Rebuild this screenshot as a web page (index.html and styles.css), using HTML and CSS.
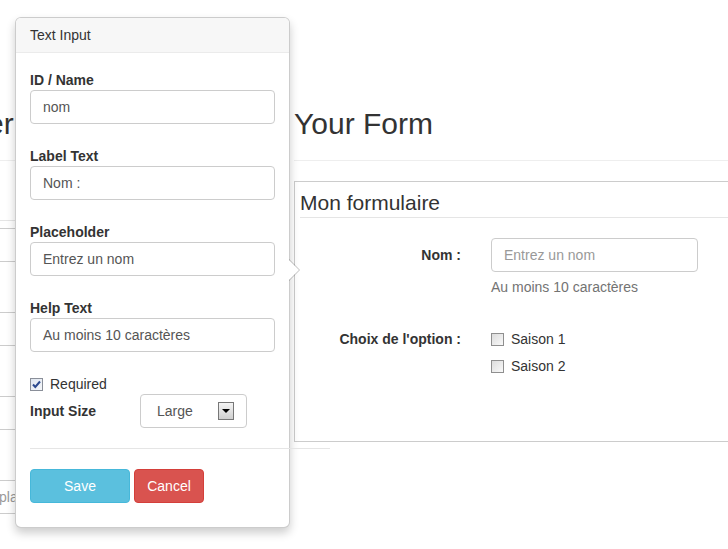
FILE: index.html
```html
<!DOCTYPE html>
<html>
<head>
<meta charset="utf-8">
<link rel="stylesheet" href="styles.css">
</head>
<body>
<div class="page">
  <div class="col-left">
    <div class="page-header"><h2>Form Builder</h2></div>
    <div class="l-legend"></div>
    <div class="l-input first"></div>
    <div class="l-input"></div>
    <div class="l-input"></div>
    <div class="l-input ph">placeholder</div>
  </div>
  <div class="col-right">
    <div class="page-header"><h2>Your Form</h2></div>
    <div class="form-box">
      <div class="legend">Mon formulaire</div>
      <div class="form-group">
        <div class="control-label">Nom :</div>
        <div class="controls">
          <div class="input placeholder">Entrez un nom</div>
          <p class="help">Au moins 10 caractères</p>
        </div>
      </div>
      <div class="form-group">
        <div class="control-label">Choix de l'option :</div>
        <div class="controls">
          <div class="checkbox"><span class="cb"></span>Saison 1</div>
          <div class="checkbox"><span class="cb"></span>Saison 2</div>
        </div>
      </div>
    </div>
  </div>
</div>

<div class="popover">
  <div class="arrow"></div>
  <h3 class="popover-title">Text Input</h3>
  <div class="popover-content">
    <div class="p-group">
      <div class="p-label">ID / Name</div>
      <div class="input">nom</div>
    </div>
    <div class="p-group">
      <div class="p-label">Label Text</div>
      <div class="input">Nom :</div>
    </div>
    <div class="p-group">
      <div class="p-label">Placeholder</div>
      <div class="input">Entrez un nom</div>
    </div>
    <div class="p-group">
      <div class="p-label">Help Text</div>
      <div class="input">Au moins 10 caractères</div>
    </div>
    <div class="req"><span class="cb checked"><svg width="11" height="11" viewBox="0 0 11 11"><path d="M2 5.5 L4.3 8 L9 2.5" fill="none" stroke="#2c4a8f" stroke-width="2"/></svg></span>Required</div>
    <div class="size-row">
      <div class="size-label">Input Size</div>
      <div class="select"><span>Large</span><span class="sel-arrow"></span></div>
    </div>
    <div class="sep"></div>
    <div class="buttons">
      <div class="btn btn-info">Save</div>
      <div class="btn btn-danger">Cancel</div>
    </div>
  </div>
</div>
</body>
</html>
```

FILE: styles.css
```css
* { box-sizing: border-box; }
html, body { margin: 0; height: 100%; }
body {
  font-family: "Liberation Sans", Arial, sans-serif;
  font-size: 14px;
  line-height: 20px;
  color: #333;
  background: #fff;
  overflow: hidden;
  position: relative;
}
.page { display: flex; margin-left: -158px; width: 1300px; }
.col-left { width: 438px; flex: none; }
.col-right { width: 800px; padding-left: 14px; flex: none; }
.page-header { padding-bottom: 20px; border-bottom: 1px solid #eee; }
.page-header h2 {
  margin: 107px 0 0;
  font-size: 30px;
  line-height: 33px;
  font-weight: normal;
  white-space: nowrap;
}
.l-legend { height: 60px; border-bottom: 1px solid #e5e5e5; }
.l-input {
  margin: 50px 0 0 146px;
  width: 280px;
  height: 34px;
  border: 1px solid #ccc;
  border-radius: 4px;
  padding: 6px 10px;
  color: #999;
}
.l-input.first { margin-top: 7px; }

.form-box {
  margin-top: 20px;
  border: 1px solid #ccc;
  padding: 6px 0 50px 5px;
  width: 700px;
}
.legend {
  font-size: 21px;
  line-height: 29px;
  border-bottom: 1px solid #e5e5e5;
  margin-bottom: 20px;
}
.form-group { display: flex; margin-bottom: 15px; }
.control-label {
  width: 176px;
  padding: 7px 15px 0 0;
  text-align: right;
  font-weight: bold;
}
.controls { padding-left: 15px; }
.input {
  height: 34px;
  border: 1px solid #ccc;
  border-radius: 4px;
  padding: 6px 12px;
  color: #555;
  background: #fff;
  white-space: nowrap;
}
.controls .input { width: 207px; }
.placeholder { color: #999 !important; }
.help { margin: 5px 0 10px; color: #737373; }
.checkbox { display: flex; align-items: center; padding-top: 7px; }
.cb {
  width: 13px;
  height: 13px;
  border: 1px solid #8f8f8f;
  background: linear-gradient(135deg, #dcdcdc, #f9f9f9);
  margin-right: 7px;
  display: flex;
  align-items: center;
  justify-content: center;
  flex: none;
}
.cb.checked { background: linear-gradient(135deg, #dfe6f0, #f5f7fa); border-color: #8a8f99; }

.popover {
  position: absolute;
  left: 15px;
  top: 17px;
  width: 275px;
  background: #fff;
  border: 1px solid rgba(0,0,0,.2);
  border-radius: 6px;
  box-shadow: 0 5px 10px rgba(0,0,0,.2);
}
.arrow {
  position: absolute;
  right: -11px;
  top: 241px;
  width: 0;
  height: 0;
  border: 11px solid transparent;
  border-right-width: 0;
  border-left-color: rgba(0,0,0,.25);
}
.arrow::after {
  content: "";
  position: absolute;
  right: 1px;
  bottom: -10px;
  border: 10px solid transparent;
  border-right-width: 0;
  border-left-color: #fff;
}
.popover-title {
  margin: 0;
  padding: 8px 14px;
  font-size: 14px;
  font-weight: normal;
  line-height: 18px;
  background: #f7f7f7;
  border-bottom: 1px solid #ebebeb;
  border-radius: 5px 5px 0 0;
}
.popover-content { padding: 17px 14px 24px; }
.p-group { margin-bottom: 22px; }
.p-label { font-weight: bold; line-height: 20px; }
.req { display: flex; align-items: center; height: 20px; }
.size-row { display: flex; align-items: center; height: 34px; }
.size-label { width: 110px; font-weight: bold; }
.select {
  width: 107px;
  height: 34px;
  border: 1px solid #ccc;
  border-radius: 4px;
  display: flex;
  align-items: center;
  padding-left: 16px;
  color: #555;
}
.sel-arrow {
  margin-left: auto;
  margin-right: 12px;
  width: 16px;
  height: 18px;
  border: 1px solid #777;
  background: linear-gradient(#f4f4f4, #cfcfcf);
  display: flex;
  align-items: center;
  justify-content: center;
}
.sel-arrow::after {
  content: "";
  border-left: 4px solid transparent;
  border-right: 4px solid transparent;
  border-top: 4px solid #000;
}
.sep { margin-top: 20px; width: 300px; border-top: 1px solid #e5e5e5; }
.buttons { margin-top: 20px; display: flex; gap: 4px; }
.btn {
  height: 34px;
  padding: 6px 12px;
  border: 1px solid transparent;
  border-radius: 4px;
  color: #fff;
  text-align: center;
}
.btn-info { width: 100px; background: #5bc0de; border-color: #46b8da; }
.btn-danger { width: 70px; background: #d9534f; border-color: #d43f3a; }
```
